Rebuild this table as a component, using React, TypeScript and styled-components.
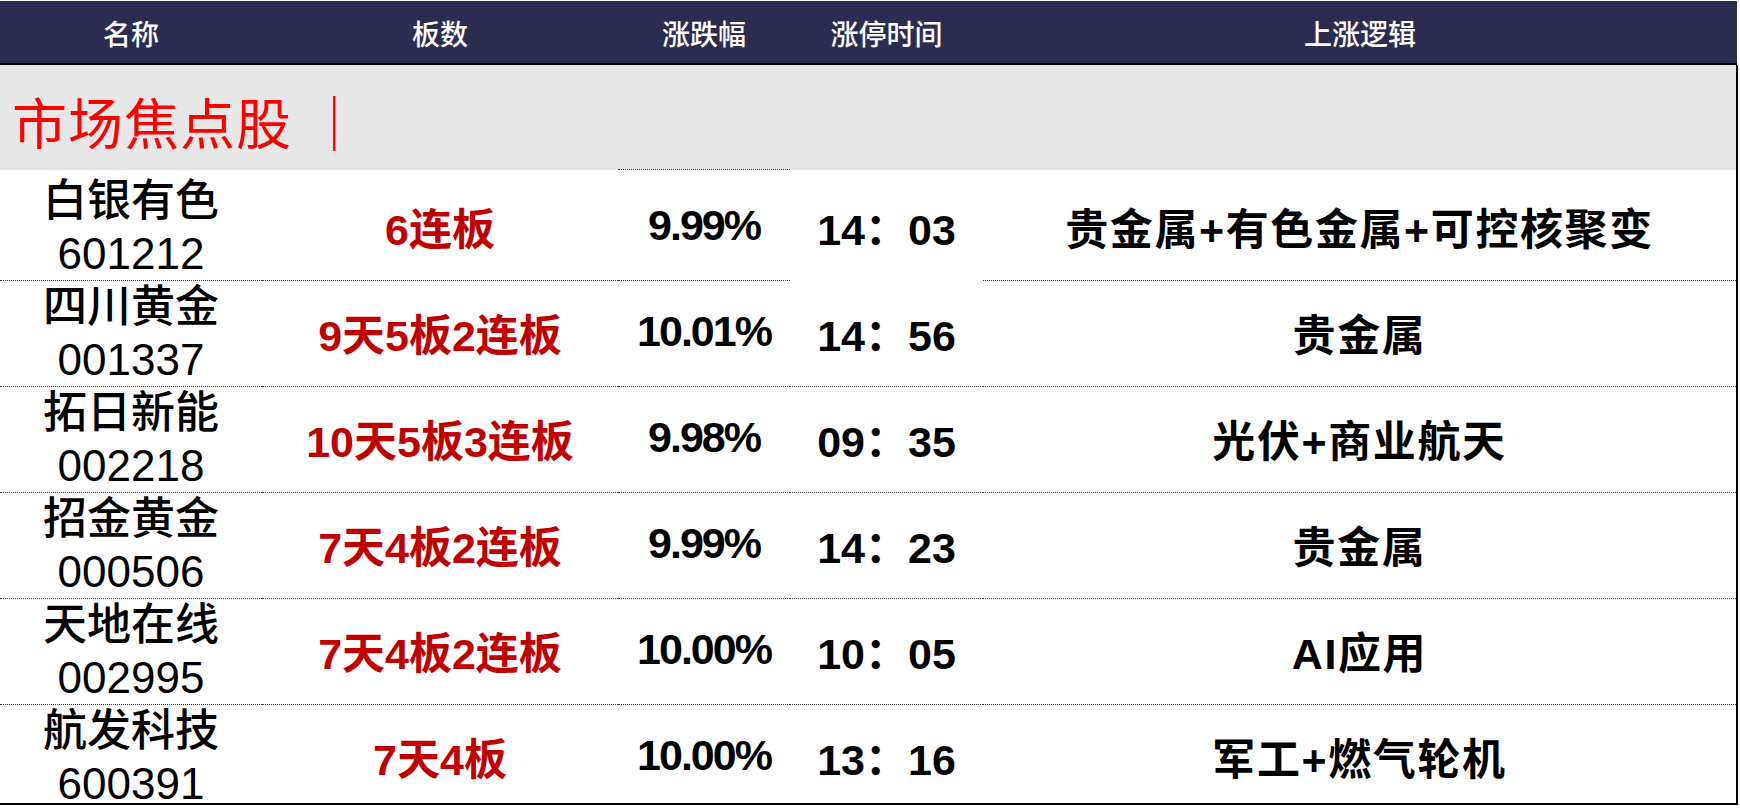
import React from "react";
import styled, { createGlobalStyle } from "styled-components";

const GlobalStyle = createGlobalStyle`
  html, body {
    margin: 0;
    padding: 0;
    background: #ffffff;
  }
  body {
    font-family: "Liberation Sans", "Noto Sans CJK SC", sans-serif;
  }
`;

type Stock = {
  name: string;
  code: string;
  boards: string;
  pct: string;
  time: string;
  logic: string;
};

const STOCKS: Stock[] = [
  { name: "白银有色", code: "601212", boards: "6连板", pct: "9.99%", time: "14：03", logic: "贵金属+有色金属+可控核聚变" },
  { name: "四川黄金", code: "001337", boards: "9天5板2连板", pct: "10.01%", time: "14：56", logic: "贵金属" },
  { name: "拓日新能", code: "002218", boards: "10天5板3连板", pct: "9.98%", time: "09：35", logic: "光伏+商业航天" },
  { name: "招金黄金", code: "000506", boards: "7天4板2连板", pct: "9.99%", time: "14：23", logic: "贵金属" },
  { name: "天地在线", code: "002995", boards: "7天4板2连板", pct: "10.00%", time: "10：05", logic: "AI应用" },
  { name: "航发科技", code: "600391", boards: "7天4板", pct: "10.00%", time: "13：16", logic: "军工+燃气轮机" },
];

const HEADERS = ["名称", "板数", "涨跌幅", "涨停时间", "上涨逻辑"];

const App: React.FC = () => {
  return (
    <>
      <GlobalStyle />
      <Sheet>
        <HeaderRow>
          {HEADERS.map((h) => (
            <HeaderCell key={h}>{h}</HeaderCell>
          ))}
        </HeaderRow>

        <SectionBar>
          <SectionTitle>市场焦点股 ｜</SectionTitle>
        </SectionBar>

        {STOCKS.map((s, i) => {
          const first = i === 0;
          const last = i === STOCKS.length - 1;
          return (
            <DataRow key={s.code} $last={last}>
              <NameCell $plain={last}>
                <NameText>{s.name}</NameText>
                <span>{s.code}</span>
              </NameCell>
              <BoardCell $plain={last}>{s.boards}</BoardCell>
              <PctCell $plain={last} $topDot={first}>
                {s.pct}
              </PctCell>
              <BoldCell $plain={last || first}>{s.time}</BoldCell>
              <LogicCell $plain={last}>{s.logic}</LogicCell>
            </DataRow>
          );
        })}
      </Sheet>
    </>
  );
};

const Sheet = styled.div`
  width: 1738px;
  padding-top: 1px;
  display: flex;
  flex-direction: column;
`;

const COLUMNS = "262px 356px 172px 193px 1fr";

const HeaderRow = styled.div`
  display: grid;
  grid-template-columns: ${COLUMNS};
  height: 62px;
  width: 1737px;
  background: #2c2c52;
  border-bottom: 2px solid #000000;
`;

const HeaderCell = styled.div`
  display: flex;
  align-items: center;
  justify-content: center;
  padding-top: 2px;
  color: #ffffff;
  font-size: 28px;
  font-weight: 500;
`;

const SectionBar = styled.div`
  display: flex;
  align-items: center;
  height: 105px;
  padding-left: 12px;
  background: #e7e7e7;
  border-right: 2px solid #000000;
`;

const SectionTitle = styled.span`
  color: #ff0000;
  font-family: "Liberation Serif", "Noto Sans CJK SC", serif;
  font-size: 55px;
  padding-top: 4px;
  letter-spacing: 1px;
`;

const DataRow = styled.div<{ $last: boolean }>`
  display: grid;
  grid-template-columns: ${COLUMNS};
  height: ${(p) => (p.$last ? "103px" : "106px")};
  border-right: 2px solid #000000;
  border-bottom: ${(p) => (p.$last ? "2px solid #000000" : "none")};
`;

const Cell = styled.div<{ $plain?: boolean; $topDot?: boolean }>`
  box-sizing: border-box;
  display: flex;
  align-items: center;
  justify-content: center;
  padding-top: 1px;
  color: #000000;
  font-size: 43px;
  white-space: nowrap;
  border-top: 1px ${(p) => (p.$topDot ? "dotted #3a3a3a" : "solid transparent")};
  border-bottom: 1px ${(p) => (p.$plain ? "solid transparent" : "dotted #3a3a3a")};
  margin-top: -1px;
`;

const NameCell = styled(Cell)`
  flex-direction: column;
  padding-top: 4px;
  font-size: 44px;
  line-height: 53px;
`;

const NameText = styled.span`
  font-weight: 500;
`;

const BoardCell = styled(Cell)`
  color: #c00000;
  font-weight: 700;
`;

const BoldCell = styled(Cell)`
  font-weight: 700;
`;

const PctCell = styled(BoldCell)`
  letter-spacing: -2px;
`;

const LogicCell = styled(BoldCell)`
  letter-spacing: 1.6px;
`;

export default App;
